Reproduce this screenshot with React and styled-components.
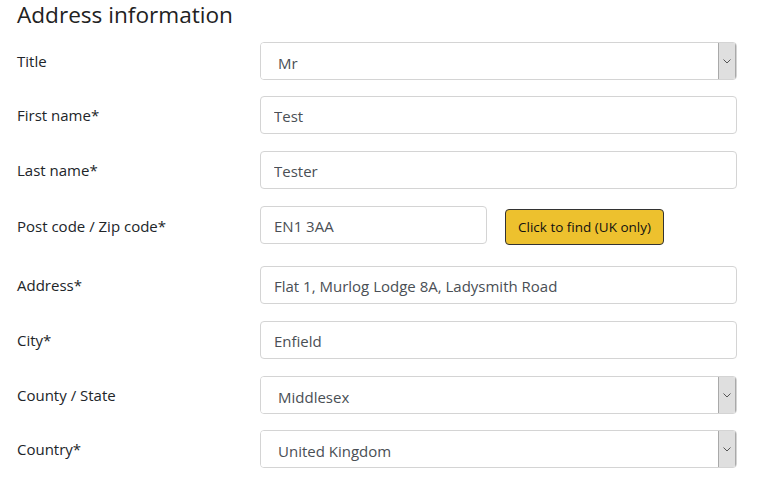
import React from 'react';
import styled, { createGlobalStyle } from 'styled-components';

const Global = createGlobalStyle`
  body {
    margin: 0;
    background: #fff;
    font-family: "Open Sans", "Noto Sans", sans-serif;
    color: #212529;
  }
`;

const Page = styled.div`
  padding: 0 23px 0 17px;
  width: 720px;
`;

const Heading = styled.h2`
  margin: 0 0 12px;
  font-size: 22.6px;
  font-weight: 400;
  line-height: 30px;
  color: #222;
`;

const Row = styled.div`
  display: grid;
  grid-template-columns: 243px 477px;
  align-items: center;
  margin-bottom: ${(p) => p.$gap || '17px'};
`;

const Label = styled.label`
  font-size: 15px;
  color: #212529;
`;

const Input = styled.input`
  box-sizing: border-box;
  width: ${(p) => p.$width || '100%'};
  height: 38px;
  padding: 1px 13px 0;
  border: 1px solid #d4d4d4;
  border-radius: 4px;
  font: 15px "Open Sans", "Noto Sans", sans-serif;
  color: #4a4f55;
  background: #fff;
  outline: none;
`;

const SelectBox = styled.div`
  display: flex;
  height: 38px;
  box-sizing: border-box;
  border: 1px solid #d4d4d4;
  border-radius: 4px;
  overflow: hidden;
`;

const NativeSelect = styled.select`
  flex: 1;
  appearance: none;
  border: none;
  outline: none;
  background: #fff;
  padding: 3px 0 0 17px;
  font: 15px "Open Sans", "Noto Sans", sans-serif;
  color: #4a4f55;
`;

const Arrow = styled.span`
  width: 16px;
  display: flex;
  align-items: center;
  justify-content: center;
  background: #dfdfdf;
  border-left: 1px solid #a9a9a9;
  border-right: 1px solid #a9a9a9;
`;

const Inline = styled.div`
  display: flex;
  align-items: flex-start;
  gap: 18px;
`;

const FindButton = styled.button`
  height: 36px;
  margin-top: 3px;
  padding: 0 12px;
  background: #edc12e;
  border: 1px solid #333;
  border-radius: 4px;
  font: 13.5px "Open Sans", "Noto Sans", sans-serif;
  color: #111;
`;

const Chevron = () => (
  <svg width="8" height="5" viewBox="0 0 8 5">
    <path d="M0.5 0.5 L4 4 L7.5 0.5" fill="none" stroke="#555" strokeWidth="1" />
  </svg>
);

const Select = ({ value }) => (
  <SelectBox>
    <NativeSelect defaultValue={value}>
      <option>{value}</option>
    </NativeSelect>
    <Arrow>
      <Chevron />
    </Arrow>
  </SelectBox>
);

export default function App() {
  return (
    <Page>
      <Global />
      <Heading>Address information</Heading>
      <Row $gap="16px">
        <Label>Title</Label>
        <Select value="Mr" />
      </Row>
      <Row>
        <Label>First name*</Label>
        <Input defaultValue="Test" />
      </Row>
      <Row>
        <Label>Last name*</Label>
        <Input defaultValue="Tester" />
      </Row>
      <Row $gap="21px">
        <Label>Post code / Zip code*</Label>
        <Inline>
          <Input $width="227px" defaultValue="EN1 3AA" />
          <FindButton>Click to find (UK only)</FindButton>
        </Inline>
      </Row>
      <Row>
        <Label>Address*</Label>
        <Input defaultValue="Flat 1, Murlog Lodge 8A, Ladysmith Road" />
      </Row>
      <Row>
        <Label>City*</Label>
        <Input defaultValue="Enfield" />
      </Row>
      <Row $gap="16px">
        <Label>County / State</Label>
        <Select value="Middlesex" />
      </Row>
      <Row>
        <Label>Country*</Label>
        <Select value="United Kingdom" />
      </Row>
    </Page>
  );
}
